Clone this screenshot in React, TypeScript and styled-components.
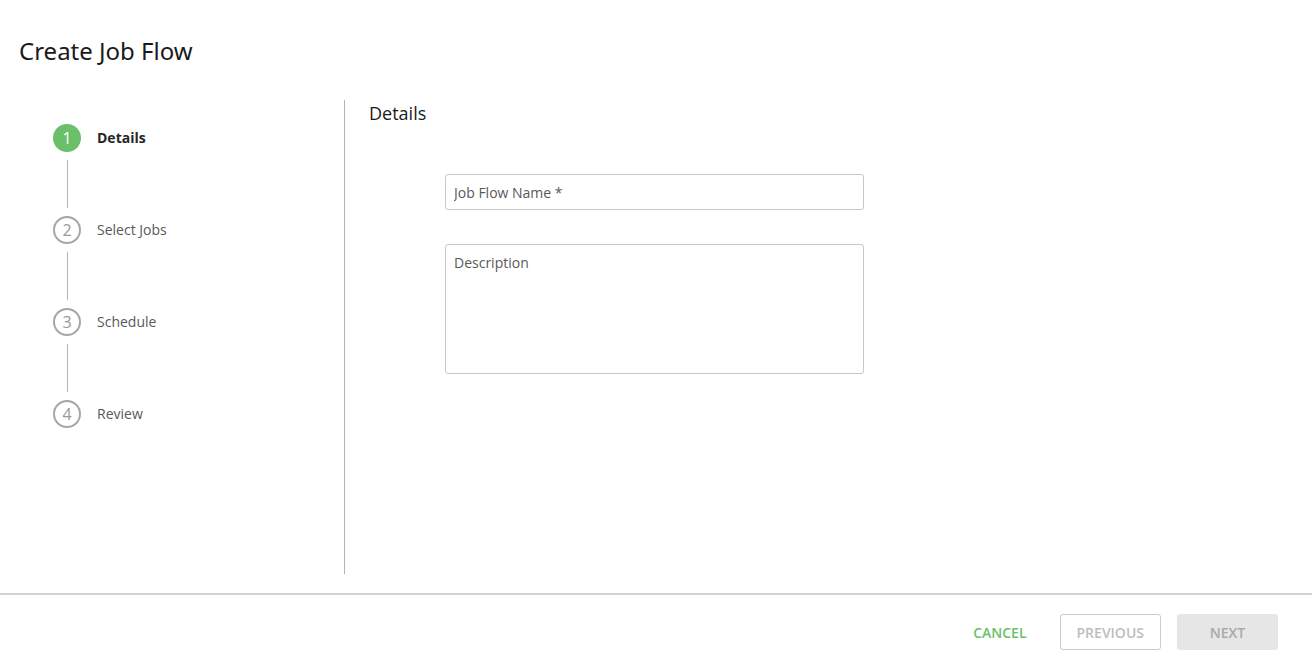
import React from 'react';
import styled, { createGlobalStyle } from 'styled-components';

const GlobalStyle = createGlobalStyle`
  html, body {
    margin: 0;
    padding: 0;
    background: #ffffff;
    font-family: 'Open Sans', 'Noto Sans', sans-serif;
    color: #404040;
  }
  * {
    box-sizing: border-box;
  }
`;

const Page = styled.div`
  display: flex;
  flex-direction: column;
  width: 100%;
  height: 666px;
`;

const Header = styled.header`
  height: 100px;
  padding: 36px 19px 0;
`;

const Title = styled.h1`
  margin: 0;
  font-family: 'Noto Sans', 'Open Sans', sans-serif;
  font-size: 24px;
  font-weight: 400;
  line-height: 30px;
  color: #1a1a1a;
`;

const Body = styled.main`
  display: flex;
  height: 474px;
`;

const Sidebar = styled.nav`
  width: 345px;
  border-right: 1px solid #b3b3b3;
  padding: 24px 0 0 53px;
`;

const StepList = styled.ol`
  list-style: none;
  margin: 0;
  padding: 0;
  display: flex;
  flex-direction: column;
`;

const StepItem = styled.li`
  display: flex;
  align-items: center;
  gap: 16px;
  height: 28px;
`;

const StepCircle = styled.span<{ $active: boolean }>`
  width: 28px;
  height: 28px;
  border-radius: 50%;
  display: flex;
  align-items: center;
  justify-content: center;
  font-size: 16px;
  flex-shrink: 0;
  background: ${({ $active }) => ($active ? '#6cbf6a' : '#ffffff')};
  border: 2px solid ${({ $active }) => ($active ? '#6cbf6a' : '#a6a6a6')};
  color: ${({ $active }) => ($active ? '#ffffff' : '#999999')};
`;

const StepLabel = styled.span<{ $active: boolean }>`
  font-size: 14px;
  line-height: 18px;
  font-weight: ${({ $active }) => ($active ? 700 : 400)};
  color: ${({ $active }) => ($active ? '#262626' : '#595959')};
`;

const Connector = styled.div`
  width: 1px;
  height: 48px;
  margin: 8px 0 8px 14px;
  background: #b3b3b3;
`;

const Content = styled.section`
  flex: 1;
  padding: 0 0 0 24px;
`;

const SectionTitle = styled.h2`
  margin: 0;
  font-size: 18px;
  font-weight: 400;
  line-height: 26px;
  color: #1a1a1a;
`;

const Form = styled.form`
  display: flex;
  flex-direction: column;
  gap: 34px;
  width: 419px;
  margin: 48px 0 0 76px;
`;

const TextInput = styled.input`
  height: 36px;
  width: 100%;
  padding: 0 8px;
  border: 1px solid #c8c8c8;
  border-radius: 3px;
  font-family: 'Open Sans', 'Noto Sans', sans-serif;
  font-size: 14px;
  color: #404040;
  outline: none;
  &::placeholder {
    color: #595959;
  }
`;

const TextArea = styled.textarea`
  height: 130px;
  width: 100%;
  padding: 8px 8px;
  border: 1px solid #c8c8c8;
  border-radius: 3px;
  font-family: 'Open Sans', 'Noto Sans', sans-serif;
  font-size: 14px;
  line-height: 20px;
  color: #404040;
  resize: none;
  outline: none;
  &::placeholder {
    color: #595959;
  }
`;

const Footer = styled.footer`
  margin-top: 19px;
  border-top: 2px solid #d4d4d4;
  display: flex;
  justify-content: flex-end;
  align-items: center;
  gap: 16px;
  padding: 19px 34px 0 0;
`;

const Button = styled.button<{ $variant: 'text' | 'outline' | 'filled' }>`
  height: 36px;
  min-width: ${({ $variant }) => ($variant === 'text' ? '86px' : '101px')};
  padding: 0 16px;
  border-radius: 3px;
  font-family: 'Open Sans', 'Noto Sans', sans-serif;
  font-size: 14px;
  font-weight: 600;
  text-transform: uppercase;
  cursor: pointer;
  border: 1px solid
    ${({ $variant }) => ($variant === 'outline' ? '#cccccc' : 'transparent')};
  background: ${({ $variant }) => ($variant === 'filled' ? '#e6e6e6' : '#ffffff')};
  color: ${({ $variant }) =>
    $variant === 'text' ? '#6cbf6a' : $variant === 'outline' ? '#bdbdbd' : '#a9a9a9'};
`;

const steps = ['Details', 'Select Jobs', 'Schedule', 'Review'];

export default function App() {
  const current = 0;
  return (
    <Page>
      <GlobalStyle />
      <Header>
        <Title>Create Job Flow</Title>
      </Header>
      <Body>
        <Sidebar>
          <StepList>
            {steps.map((step, i) => (
              <React.Fragment key={step}>
                {i > 0 && <Connector />}
                <StepItem>
                  <StepCircle $active={i === current}>{i + 1}</StepCircle>
                  <StepLabel $active={i === current}>{step}</StepLabel>
                </StepItem>
              </React.Fragment>
            ))}
          </StepList>
        </Sidebar>
        <Content>
          <SectionTitle>Details</SectionTitle>
          <Form>
            <TextInput placeholder="Job Flow Name *" />
            <TextArea placeholder="Description" />
          </Form>
        </Content>
      </Body>
      <Footer>
        <Button type="button" $variant="text">Cancel</Button>
        <Button type="button" $variant="outline">Previous</Button>
        <Button type="button" $variant="filled">Next</Button>
      </Footer>
    </Page>
  );
}
